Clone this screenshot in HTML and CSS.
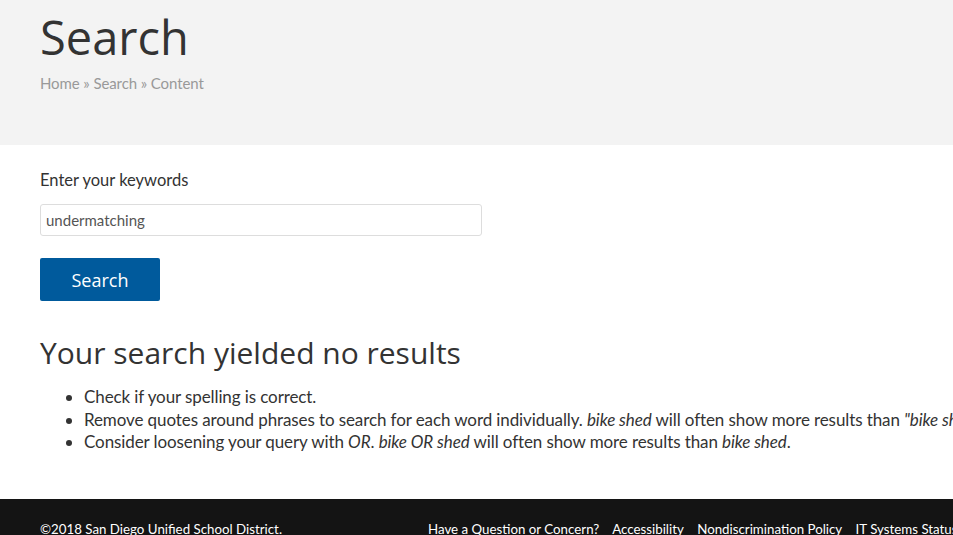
FILE: index.html
```html
<!DOCTYPE html>
<html lang="en">
<head>
    <meta charset="UTF-8">
    <title>Search | San Diego Unified School District</title>
    <link rel="stylesheet" href="styles.css">
</head>
<body>
    <div class="page-header">
        <div class="container">
            <h1 class="page-title">Search</h1>
            <div class="breadcrumb">
                <a href="#">Home</a> <span class="sep">&raquo;</span> <a href="#">Search</a> <span class="sep">&raquo;</span> <a href="#">Content</a>
            </div>
        </div>
    </div>

    <div class="container main">
        <form class="search-form">
            <label for="keys">Enter your keywords</label>
            <input type="text" id="keys" value="undermatching">
            <button type="button" class="btn-search">Search</button>
        </form>

        <h2 class="no-results">Your search yielded no results</h2>
        <ul class="tips">
            <li>Check if your spelling is correct.</li>
            <li>Remove quotes around phrases to search for each word individually. <em>bike shed</em> will often show more results than <em>"bike shed"</em>.</li>
            <li>Consider loosening your query with <em>OR</em>. <em>bike OR shed</em> will often show more results than <em>bike shed</em>.</li>
        </ul>
    </div>

    <footer class="site-footer">
        <div class="container footer-row">
            <div class="copyright">&copy;2018 San Diego Unified School District.</div>
            <nav class="footer-links">
                <a href="#">Have a Question or Concern?</a>
                <a href="#">Accessibility</a>
                <a href="#">Nondiscrimination Policy</a>
                <a href="#">IT Systems Status</a>
            </nav>
        </div>
    </footer>
</body>
</html>
```

FILE: styles.css
```css
html, body {
    margin: 0;
    overflow: hidden;
}
body {
    font-family: Lato, "Liberation Sans", sans-serif;
    color: #333;
    min-width: 1170px;
}
.container {
    padding: 0 40px;
}
.page-header {
    background-color: #f3f3f3;
    height: 145px;
    box-sizing: border-box;
    padding-top: 8px;
}
.page-title {
    font-family: "Open Sans", sans-serif;
    font-weight: 400;
    font-size: 47px;
    line-height: 58px;
    margin: 0;
    color: #333;
}
.breadcrumb {
    margin-top: 8px;
    font-size: 15px;
    color: #999;
    letter-spacing: -0.1px;
}
.breadcrumb a {
    color: #999;
    text-decoration: none;
}
.main {
    padding-top: 25px;
}
.search-form label {
    display: block;
    font-size: 16.5px;
    margin-bottom: 14px;
}
.search-form input {
    display: block;
    width: 442px;
    height: 32px;
    box-sizing: border-box;
    border: 1px solid #ddd;
    border-radius: 3px;
    padding: 0 5px;
    font-family: Lato, sans-serif;
    font-size: 15px;
    color: #555;
}
.btn-search {
    margin-top: 22px;
    width: 120px;
    height: 43px;
    background-color: #005a9c;
    color: #fff;
    border: none;
    border-radius: 2px;
    font-family: "Open Sans", sans-serif;
    font-size: 18px;
}
.no-results {
    font-family: "Open Sans", sans-serif;
    font-weight: 400;
    font-size: 30px;
    margin: 31px 0 13px;
}
.tips {
    margin: 0 0 45px;
    padding-left: 44px;
    font-size: 17px;
    line-height: 22.5px;
    letter-spacing: -0.1px;
}
.site-footer {
    background-color: #141414;
    color: #fff;
    height: 80px;
    font-size: 13.3px;
    padding-top: 22px;
    box-sizing: border-box;
}
.footer-row {
    display: flex;
}
.copyright {
    width: 388px;
}
.footer-links a {
    color: #fff;
    text-decoration: none;
    margin-right: 10px;
}
```
